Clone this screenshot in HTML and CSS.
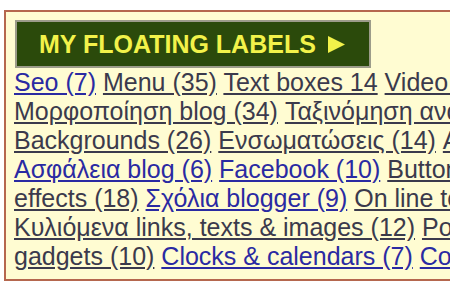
FILE: index.html
```html
<!DOCTYPE html>
<html>
<head>
<meta charset="utf-8">
<link rel="stylesheet" href="styles.css">
</head>
<body>
<div class="box">
  <div class="title">
    <span>MY FLOATING LABELS</span>
    <svg class="arrow" width="17" height="17" viewBox="0 0 17 17"><polygon points="0,0 17,8.5 0,17" fill="#f2f24a"/></svg>
  </div>
  <div class="cloud">
    <div class="row"><a class="b" href="#">Seo (7)</a> <a class="d" href="#">Menu (35)</a> <a class="d" href="#">Text boxes 14</a> <a class="d" href="#">Video (5)</a></div>
    <div class="row"><a class="d" href="#">Μορφοποίηση blog (34)</a> <a class="d" href="#">Ταξινόμηση αναρτήσεων (8)</a></div>
    <div class="row"><a class="d" href="#">Backgrounds (26)</a> <a class="d" href="#">Ενσωματώσεις (14)</a> <a class="d" href="#">Animation (6)</a></div>
    <div class="row"><a class="b" href="#">Ασφάλεια blog (6)</a> <a class="b" href="#">Facebook (10)</a> <a class="d" href="#">Button</a></div>
    <div class="row"><a class="d" href="#">effects (18)</a> <a class="b" href="#">Σχόλια blogger (9)</a> <a class="d" href="#">On line tools (11)</a></div>
    <div class="row"><a class="d" href="#">Κυλιόμενα links, texts &amp; images (12)</a> <a class="d" href="#">Posts</a></div>
    <div class="row"><a class="d" href="#">gadgets (10)</a> <a class="b" href="#">Clocks &amp; calendars (7)</a> <a class="b" href="#">Contact forms (4)</a></div>
  </div>
</div>
</body>
</html>
```
FILE: styles.css
```css
html, body {
  margin: 0;
  padding: 0;
  overflow: hidden;
  background: #ffffff;
}
.box {
  margin: 10px 0 0 4px;
  width: 620px;
  border: 2px solid #b5674e;
  background: #fffcd2;
  padding: 8px 8px 8px 8px;
  font-family: "Liberation Sans", Arial, sans-serif;
}
.title {
  display: flex;
  align-items: center;
  width: fit-content;
  margin-left: 1px;
  background: #2b4a0b;
  border: 2px solid #9c9c8a;
  padding: 8px 24px 8px 22px;
  color: #f2f24a;
  font-weight: bold;
  font-size: 25px;
  line-height: 28px;
}
.arrow {
  margin-left: 12px;
  display: block;
}
.cloud {
  font-size: 25px;
  line-height: 29px;
}
.row {
  white-space: nowrap;
}
.cloud a {
  text-decoration: underline;
}
.cloud a.b {
  color: #2a2aa2;
}
.cloud a.d {
  color: #3b3a4c;
}
```
